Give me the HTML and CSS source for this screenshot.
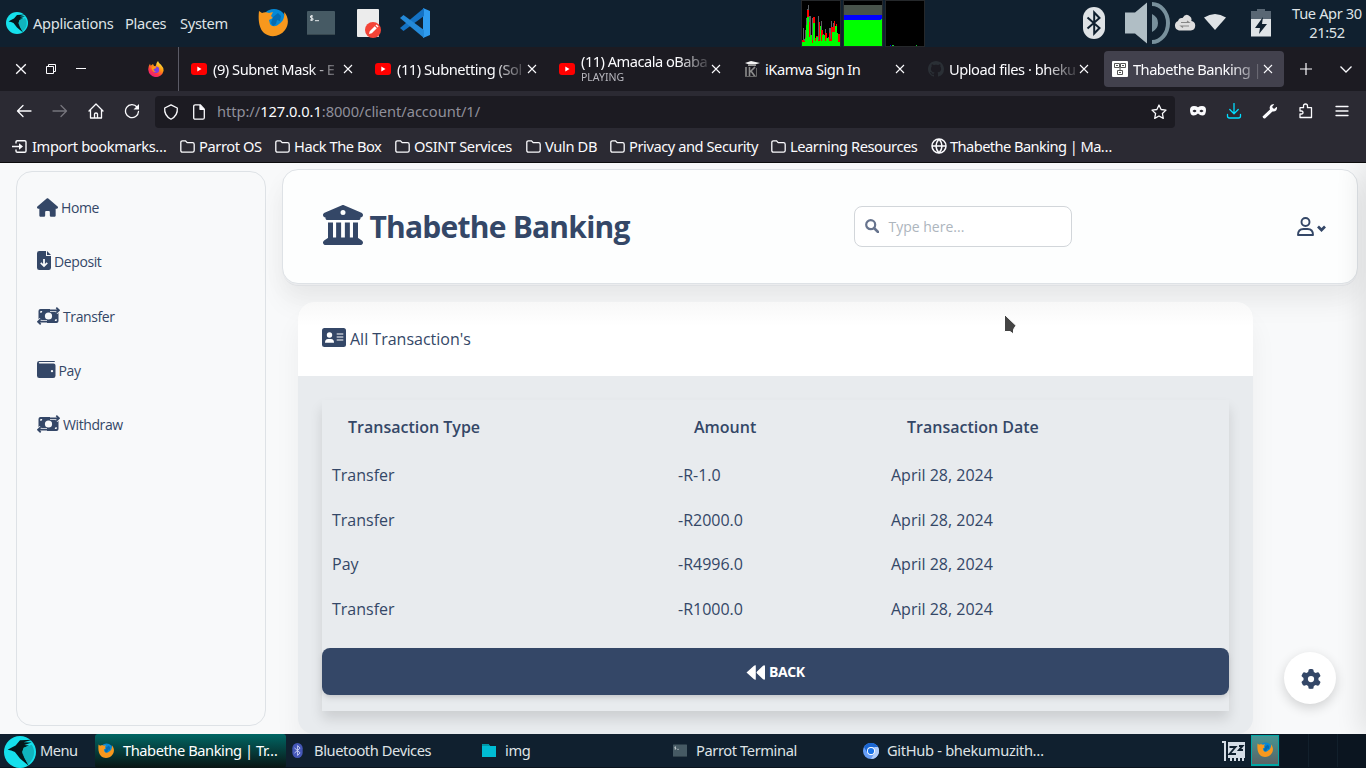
FILE: index.html
```html
<!DOCTYPE html>
<html lang="en">
<head>
<meta charset="utf-8">
<title>Thabethe Banking | Transactions</title>
<link rel="stylesheet" href="styles.css">
</head>
<body>
<svg class="defs" aria-hidden="true">
  <symbol id="parrot" viewBox="0 0 22 22"><circle cx="11" cy="11" r="11" fill="#15e0ec"/><path d="M2.500 9.500 5 8 8 6.500 11 3l8.500-.5-6 1.800 5.500.2-5 1.700 3.200.3L13.500 8l-1 3 1.500 4 3 5.500-6-5L7.500 11 5 10z" fill="#04161b"/><path d="M13.500 8 19 6c3 4 2 10-2.500 13.500L12.500 12z" fill="#0d8f99" opacity=".55"/></symbol>
  <symbol id="fox" viewBox="0 0 30 30"><circle cx="16" cy="13.500" r="12.500" fill="#0589d6"/><path d="M1 3l3 2c2-1 5-1 7 0l4-1-2 4 2 2-4 2 1 4c2 3 6 3 9 0 4-2 6-7 5-12 5 5 5 13 1 18-5 7-15 8-21 3C1 20 0 12 1 3z" fill="#f8981d"/><path d="M15 9l5-4 3 3-1 5-3-1-1 4-3 2-2-3z" fill="#046bb1"/></symbol>
  <symbol id="term" viewBox="0 0 28 24"><rect width="28" height="24" rx="1" fill="#465a64"/><path d="M0 23h28v1H0z" fill="#37474f"/><path d="M6 5H3.500v1.500L6 7.500V9H3M4.700 4v6M8 9.700h4" stroke="#e4e8ea" stroke-width="1" fill="none"/></symbol>
  <symbol id="yt" viewBox="0 0 16 12"><rect width="16" height="12" rx="3" fill="#f00"/><path d="M6.300 3.500v5l4.200-2.500z" fill="#fff"/></symbol>
  <symbol id="x" viewBox="0 0 10 10"><path d="M1 1l8 8M9 1 1 9" stroke="#fbfbfe" stroke-width="1.100" fill="none"/></symbol>
  <symbol id="folder" viewBox="0 0 15 13"><path d="M.8 2.500Q.8.800 2.500.8h3l1.700 1.900h5.300q1.700 0 1.700 1.700v6q0 1.700-1.700 1.700h-10q-1.700 0-1.700-1.700z" fill="none" stroke="#fbfbfe" stroke-width="1.300"/></symbol>
  <symbol id="bt" viewBox="0 0 22 32"><rect width="22" height="32" rx="11" fill="currentColor"/><path d="M4.500 10.500l12 10.500-5.300 5.500v-21L16.500 11l-12 10.500" fill="none" stroke="var(--rune, #10202f)" stroke-width="2"/></symbol>
  <symbol id="money" viewBox="0 0 23 18"><path d="M3.500 2h16q2 0 2 2v10q0 2-2 2h-16q-2 0-2-2V4q0-2 2-2z" fill="#344767"/><circle cx="11.500" cy="9" r="3.600" fill="#f8f9fa"/><path d="M3.300 4h2q0 2-2 2zM19.700 14h-2q0-2 2-2z" fill="#f8f9fa"/><path d="M13 3.300h9.500M19.300.7 22 3.300 19.300 5.900M10 14.700H.5M3.700 12.100 1 14.700l2.700 2.600" fill="none" stroke="#f8f9fa" stroke-width="3.200"/><path d="M13 3.300h9M19.300.7 22 3.300 19.300 5.900M10 14.700H1M3.700 12.100 1 14.700l2.700 2.600" fill="none" stroke="#344767" stroke-width="1.700"/></symbol>
</svg>

<header class="panel">
  <svg class="p-logo"><use href="#parrot"/></svg>
  <span class="p-apps">Applications</span><span class="p-places">Places</span><span class="p-system">System</span>
  <svg class="p-fox"><use href="#fox"/></svg>
  <svg class="p-term"><use href="#term"/></svg>
  <svg class="p-doc" viewBox="0 0 25 30"><rect width="22" height="28" rx="1" fill="#ececec"/><circle cx="16" cy="21" r="8" fill="#f44336"/><path d="M12 25l.7-2.800 5-5 2.100 2.100-5 5zM18.500 16.400l1-1 2.100 2.100-1 1z" fill="#fff"/></svg>
  <svg class="p-code" viewBox="0 0 30 30"><path d="M23 0l7 3v24l-7 3z" fill="#2f9cf0"/><path d="M0 20l3.500 3L24 8V0z" fill="#1472c4"/><path d="M3.500 7 0 10l24 20v-8z" fill="#2489d8"/></svg>
  <svg class="mon mon-cpu" viewBox="0 0 38 45"><rect width="38" height="45"/><path d="M1 45V27h1v11h1v-9h1V17h1V8h1V4h1v11h2v20h1V17h2v15h1v5h2v-1h1V15h1v16h2V20h1v13h2v3h1v-8h1v10h2v-2h1v-9h2v-7h1v7h1v-5h1v10h1v13z" fill="#5d6165"/><path d="M0 45v-6h2v1h2V25h1V9h2v12h1v13h2v5h1V16h2v21h1v-2h2v4h1V21h1v15h1v-7h2v8h2v-5h2v6h2v-6h1v6h1V26h3v-6h1v6h1v-3h1v18h1v-8h2v8h1v-5h1v9z" fill="#f00"/><path d="M0 45v-4h3v-4h1V24h1v-8h2v20h1v-2h2v8h1V22h2v18h1v-4h2v4h2V25h1v15h1v-6h3v6h1v-3h3v3h3V31h3v-6h2v7h1v9h2v-6h1v6h2v4z" fill="#0f0"/></svg>
  <svg class="mon" viewBox="0 0 38 45"><rect width="38" height="45"/><path d="M0 4h38v10H0z" fill="#48534b"/><path d="M0 14h38v5H0z" fill="#00f"/><path d="M0 19h37v-1h1v27H0z" fill="#0f0"/></svg>
  <svg class="mon" viewBox="0 0 38 45"><rect width="38" height="45"/><path d="M6 44h2v1H6zm24 0h1v1h-1z" fill="#1c3"/><path d="M4 44h1v1H4z" fill="#00f"/></svg>
  <svg class="p-bt"><use href="#bt"/></svg>
  <svg class="p-vol" viewBox="0 0 45 42"><path d="M0 10.500h10L22 .5v41L10 31.500H0z" fill="#b0bec5"/><path d="M27 12q6 3 6 9t-6 9zM27 0a18 21 0 0 1 0 42v-4a14 17 0 0 0 0-34z" fill="#78909c"/></svg>
  <svg class="p-cloud" viewBox="0 0 22 17"><path d="M5 16.500a5 5 0 0 1-1-9.500Q5 3.500 8.500 4 12-1.500 16 2.500q2.200 1.700 1.300 4.500a4.800 4.800 0 0 1-.5 9.500z" fill="#dedede"/><path d="M7 8.500h8l-2-1.500M15 12H7l2 1.500" fill="none" stroke="#888" stroke-width="1.100"/></svg>
  <svg class="p-wifi" viewBox="0 0 22 16"><path d="M0 3.500q11-7 22 0L11 16z" fill="#dfe3e6"/></svg>
  <svg class="p-batt" viewBox="0 0 20 28"><path d="M0 2h6V0h8v2h6v8H0z" fill="#596774"/><path d="M0 10h20v17.500H0z" fill="#dfe3e6"/><path d="M12 8 4 19h5l-1 6 8-10h-5z" fill="#10202f"/></svg>
  <div class="clock"><span>Tue Apr 30</span><span>21:52</span></div>
</header>

<div class="tabs">
  <svg class="w-x"><use href="#x"/></svg>
  <svg class="w-max" viewBox="0 0 10 10"><path d="M2.500 2.500V.5h7v7h-2M.5 2.500h7v7h-7z" fill="none" stroke="#fbfbfe"/></svg>
  <svg class="w-min" viewBox="0 0 10 10"><path d="M0 4.500h10" stroke="#fbfbfe"/></svg>
  <svg class="ffx" viewBox="0 0 16 16"><defs><linearGradient id="fg" x1=".8" y1="0" x2=".2" y2="1"><stop offset="0" stop-color="#fff44f"/><stop offset=".4" stop-color="#ff980e"/><stop offset=".7" stop-color="#ff3647"/><stop offset="1" stop-color="#e31587"/></linearGradient></defs><path d="M10 0q.5 2 3 3.700Q16 7 15.500 10A7.700 7.700 0 0 1 .3 9Q0 5.500 2 2.800l.7 2L5 3l1 2q1 .2 2-.5Q8 2 10 0z" fill="url(#fg)"/><circle cx="8" cy="8.700" r="3.200" fill="#7b3fe4"/><path d="M3.500 6.300q3-1.500 5 0-1 2-3 1.700 0 2 2.500 3-4 .8-4.500-4.700z" fill="#ff980e"/></svg>
  <div class="tablist">
    <div class="tab"><svg class="fav yt"><use href="#yt"/></svg><span class="ttl">(9) Subnet Mask - E</span><svg class="cls"><use href="#x"/></svg></div>
    <div class="tab"><svg class="fav yt"><use href="#yt"/></svg><span class="ttl">(11) Subnetting (Sol</span><svg class="cls"><use href="#x"/></svg></div>
    <div class="tab"><svg class="fav yt"><use href="#yt"/></svg><span class="ttl two">(11) Amacala oBaba<small>PLAYING</small></span><svg class="cls"><use href="#x"/></svg></div>
    <div class="tab"><svg class="fav" viewBox="0 0 16 16"><path d="M1 2l6-2 9 2-5 1.500H5z" fill="#f4f4f4"/><path d="M4 3.500h8V5H4z" fill="#999"/><path d="M2 6v9.500M5.500 6v9.500M6 11l5-5M7 10l4 5.500" stroke="#8d8d8d" stroke-width="1.600" fill="none"/><path d="M1 15.500h11.500V7" stroke="#666" fill="none"/></svg><span class="ttl plain">iKamva Sign In</span><svg class="cls"><use href="#x"/></svg></div>
    <div class="tab"><svg class="fav" viewBox="0 0 16 16"><path fill="#2a2f35" d="M8 0C3.580 0 0 3.580 0 8c0 3.540 2.290 6.530 5.470 7.590.4.070.55-.17.55-.38 0-.19-.01-.82-.01-1.490-2.010.37-2.530-.49-2.690-.94-.09-.23-.48-.94-.82-1.130-.28-.15-.68-.52-.01-.53.63-.01 1.080.58 1.230.82.72 1.210 1.870.87 2.330.66.070-.52.28-.87.51-1.070-1.780-.2-3.640-.89-3.640-3.950 0-.87.31-1.590.82-2.150-.08-.2-.36-1.020.08-2.120 0 0 .67-.21 2.200.82.64-.18 1.320-.27 2-.27s1.360.09 2 .27c1.530-1.040 2.200-.82 2.200-.82.44 1.100.16 1.920.08 2.120.51.56.82 1.270.82 2.150 0 3.070-1.870 3.750-3.650 3.950.29.25.54.73.54 1.480 0 1.070-.01 1.930-.01 2.200 0 .21.15.46.55.38A8 8 0 0 0 16 8c0-4.420-3.580-8-8-8z"/></svg><span class="ttl">Upload files · bheku</span><svg class="cls"><use href="#x"/></svg></div>
    <div class="tab on"><svg class="fav" viewBox="0 0 16 16"><rect width="16" height="16" rx="1" fill="#fff"/><path d="M2.500 2.500h5v4h-5zM8.500 2.500h5v4h-5zM5.500 9.500h5v4h-5zM8 6.500v3M4 4.500h2M10 4.500h2M7 11.500h2" fill="none" stroke="#555"/></svg><span class="ttl">Thabethe Banking |</span><svg class="cls"><use href="#x"/></svg></div>
  </div>
  <svg class="t-plus" viewBox="0 0 12 12"><path d="M6 0v12M0 6h12" stroke="#fbfbfe" stroke-width="1.200"/></svg>
  <svg class="t-chev" viewBox="0 0 12 7"><path d="M.5.500 6 6 11.500.5" fill="none" stroke="#fbfbfe" stroke-width="1.300"/></svg>
</div>

<div class="nav">
  <div class="btn"><svg viewBox="0 0 16 16"><path d="M15 8H1.800M7 2.500 1.500 8 7 13.500"/></svg></div>
  <div class="btn dim"><svg viewBox="0 0 16 16"><path d="M1 8h13.200M9 2.500 14.500 8 9 13.500"/></svg></div>
  <div class="btn"><svg viewBox="0 0 16 16"><path d="M1 8l7-7 7 7M2.500 7v8h11V7M6.500 15v-4q0-1 1.500-1t1.500 1v4"/></svg></div>
  <div class="btn"><svg viewBox="0 0 16 16"><path d="M13 4A6.500 6.500 0 1 0 14.500 8.500"/><path class="solid" d="M15 1v5.500H9.500z"/></svg></div>
  <div class="url">
    <svg class="u-shield" viewBox="0 0 16 16"><path d="M8 .8 14.300 4q.7 7.500-6.300 11.200Q1 11.500 1.700 4z"/></svg>
    <svg class="u-page" viewBox="0 0 16 16"><path d="M2.700 2.300q0-1.500 1.500-1.500h5l4.100 4.300v8.600q0 1.500-1.500 1.500H4.200q-1.500 0-1.500-1.500zM9 1v4.300h4.300"/><path d="M9 1v4.500h4.500z" class="solid"/></svg>
    <span class="addr">http://<b>127.0.0.1</b>:8000/client/account/1/</span>
    <svg class="u-star" viewBox="0 0 16 16"><path d="M8 1l2.100 4.500 4.900.6-3.600 3.400.9 4.900L8 12l-4.300 2.400.9-4.900L1 6.100l4.900-.6z"/></svg>
  </div>
  <div class="btn"><svg viewBox="0 0 16 16"><path class="solid" fill-rule="evenodd" d="M4 3q2.500 0 4 1.200Q9.500 3 12 3q4 0 4 4 0 5.500-3.700 5.500-2.300 0-4.300-2-2 2-4.300 2Q0 12.500 0 7q0-4 4-4zM2.500 8q2.300 2.600 4 0-1.700-2.300-4 0zM9.500 8q1.700 2.600 4 0-2.300-2.300-4 0z"/></svg></div>
  <div class="btn cyan"><svg viewBox="0 0 16 16"><path d="M8 .5v10M3.800 6.500 8 10.700l4.200-4.200M1.500 11.500V13q0 2 2 2h9q2 0 2-2v-1.500"/></svg></div>
  <div class="btn"><svg viewBox="0 0 16 16"><path class="solid" d="M15 4q.5 5-4.500 4.500L3 15.500q-2 .5-2.500-2L8 6.500Q6.500 2 11.500 1L12 1.500 10 4l2 2 2.500-2z"/></svg></div>
  <div class="btn"><svg viewBox="0 0 16 16"><path d="M2 8V4.700h3.500V3q0-2 2-2t2 2v1.700h4v9.800H2V11h1.500q1.500 0 1.500-1.500T3.500 8z"/></svg></div>
  <div class="btn"><svg viewBox="0 0 16 16"><path d="M2 3.500h12M2 8h12M2 12.500h12"/></svg></div>
</div>

<div class="marks">
  <div class="mark m1"><svg viewBox="0 0 15 13"><path d="M4 3.500V2Q4 .700 5.300.700h7.400q1.300 0 1.300 1.300v9q0 1.300-1.300 1.300H5.300Q4 12.300 4 11V9.500M0 6.500h9.500" fill="none" stroke="#fbfbfe" stroke-width="1.400"/><path d="M7 3.200v6.600l4-3.300z" fill="#fbfbfe"/></svg><span>Import bookmarks…</span></div>
  <div class="mark m2"><svg><use href="#folder"/></svg><span>Parrot OS</span></div>
  <div class="mark m3"><svg><use href="#folder"/></svg><span>Hack The Box</span></div>
  <div class="mark m4"><svg><use href="#folder"/></svg><span>OSINT Services</span></div>
  <div class="mark m5"><svg><use href="#folder"/></svg><span>Vuln DB</span></div>
  <div class="mark m6"><svg><use href="#folder"/></svg><span>Privacy and Security</span></div>
  <div class="mark m7"><svg><use href="#folder"/></svg><span>Learning Resources</span></div>
  <div class="mark m8"><svg class="globe" viewBox="0 0 16 16"><path d="M8 1a7 7 0 1 0 0 14A7 7 0 1 0 8 1zM8 1Q2 8 8 15 14 8 8 1M1 8h14" fill="none" stroke="#fbfbfe" stroke-width="1.500"/></svg><span>Thabethe Banking | Ma…</span></div>
</div>

<div class="page">
  <aside class="side">
    <a><svg class="i-home" viewBox="0 0 576 512"><path d="M575.800 255.500c0 18-15 32.100-32 32.100h-32l.7 160.200V472c0 22.100-17.900 40-40 40H392c-22.100 0-40-17.900-40-40v-88c0-17.700-14.300-32-32-32h-64c-17.700 0-32 14.300-32 32v88c0 22.100-17.900 40-40 40h-80c-22.100 0-40-17.900-40-40V287.600H32c-18 0-32-14-32-32.100 0-9 3-17 10-24L266.400 8c7-7 15-8 22-8s15 2 21 7l255.400 224.500c8 7 12 15 11 24z"/></svg>Home</a>
    <a><svg class="i-dep" viewBox="0 0 14 19"><path fill-rule="evenodd" d="M0 2.300Q0 0 2.300 0H9v5h5v11.700Q14 19 11.700 19H2.300Q0 19 0 16.700zM6.100 8v5L4.300 11.300 3.200 12.500 7 16.200l3.800-3.700-1.100-1.200L7.900 13V8zM10 0l4 4h-4z"/></svg>Deposit</a>
    <a><svg class="i-mon"><use href="#money"/></svg>Transfer</a>
    <a><svg class="i-pay" viewBox="0 0 18.500 17"><path fill-rule="evenodd" d="M2.300 0H17q1 0 1 1.100H2.500q-.7 0-.7.700t.7.700h14q2 0 2 2v10.200q0 2.300-2.300 2.300H2.300Q0 17 0 14.700V2.300Q0 0 2.300 0zM15 8.900a1.200 1.200 0 1 0 0 2.400 1.200 1.200 0 0 0 0-2.400z"/></svg>Pay</a>
    <a><svg class="i-mon"><use href="#money"/></svg>Withdraw</a>
  </aside>
  <main class="main">
    <div class="top">
      <svg class="bank" viewBox="0 0 512 512"><path d="M243.400 2.600l-224 96c-14 6-21.800 21-18.700 35.800S16.800 160 32 160v8c0 13.300 10.700 24 24 24h400c13.300 0 24-10.700 24-24v-8c15.200 0 28.300-10.700 31.300-25.600s-4.800-29.900-18.700-35.800l-224-96c-8-3.400-17.200-3.400-25.200 0zM128 224H64v196.300c-.6.3-1.200.7-1.800 1.100l-48 32c-11.700 7.800-17 22.400-12.900 35.900S17.900 512 32 512h448c14.100 0 26.500-9.200 30.600-22.700s-1.100-28.100-12.900-35.900l-48-32c-.6-.4-1.200-.7-1.800-1.100V224h-64v192h-40V224h-64v192h-48V224h-64v192h-40V224zM256 64a32 32 0 1 1 0 64 32 32 0 1 1 0-64z"/></svg>
      <h1>Thabethe Banking</h1>
      <div class="search"><svg viewBox="0 0 14 14"><circle cx="5.700" cy="5.700" r="4.500" fill="none" stroke="#67748e" stroke-width="2.200"/><path d="M9 9l4 4" stroke="#67748e" stroke-width="2.500" stroke-linecap="round"/></svg><span>Type here...</span></div>
      <svg class="user" viewBox="0 0 29 19"><g fill="none" stroke="#344767"><circle cx="8.500" cy="5" r="4" stroke-width="1.900"/><path d="M1 18q0-6 5.500-6h4q5.500 0 5.500 6z" stroke-width="1.900" stroke-linejoin="round"/><path d="M21 9.500l3.500 3.500L28 9.500" stroke-width="2.700"/></g></svg>
    </div>
    <section class="card">
      <div class="card-head"><svg viewBox="0 0 24 19"><rect width="24" height="19" rx="2.500" fill="#344767"/><g fill="#fff"><circle cx="7.500" cy="7" r="2.700"/><path d="M3 14.700q0-3.700 3-3.700h3q3 0 3 3.700zM14.700 5.400h6.600v1.200h-6.600zM14.700 8.400h6.600v1.200h-6.600zM14.700 11.400h6.600v1.200h-6.600z"/></g></svg>All Transaction's</div>
      <div class="card-body">
        <div class="box">
          <div class="row head"><span>Transaction Type</span><span>Amount</span><span>Transaction Date</span></div>
          <div class="row"><span>Transfer</span><span>-R-1.0</span><span>April 28, 2024</span></div>
          <div class="row"><span>Transfer</span><span>-R2000.0</span><span>April 28, 2024</span></div>
          <div class="row"><span>Pay</span><span>-R4996.0</span><span>April 28, 2024</span></div>
          <div class="row"><span>Transfer</span><span>-R1000.0</span><span>April 28, 2024</span></div>
          <div class="back"><svg viewBox="0 0 19 15"><path d="M0 7.500 7.500.7Q9.500-.5 9.500 1.500v12q0 2-2 .8zM9.500 7.500 16.500.7Q18.500-.5 18.500 1.500v12q0 2-2 .8z" fill="#fff"/><path d="M9.700 1v13" stroke="#344767" stroke-width=".7"/></svg>BACK</div>
        </div>
      </div>
    </section>
  </main>
  <div class="edge"></div>
  <div class="gear"><svg viewBox="0 0 512 512"><path d="M495.900 166.600c3.200 8.700.5 18.400-6.400 24.600l-43.300 39.400c1.100 8.300 1.700 16.800 1.700 25.400s-.6 17.100-1.700 25.400l43.300 39.400c6.900 6.200 9.600 15.900 6.400 24.600-4.400 11.900-9.700 23.300-15.800 34.300l-4.700 8.100c-6.600 11-14 21.400-22.100 31.200-5.900 7.200-15.700 9.600-24.500 6.800l-55.700-17.700c-13.400 10.300-28.200 18.900-44 25.400l-12.500 57.100c-2 9.100-9 16.300-18.200 17.800-13.800 2.300-28 3.500-42.500 3.500s-28.700-1.200-42.500-3.500c-9.200-1.500-16.200-8.700-18.200-17.800l-12.500-57.100c-15.800-6.500-30.600-15.100-44-25.400l-55.600 17.800c-8.800 2.800-18.600.3-24.500-6.800-8.100-9.800-15.500-20.200-22.100-31.200l-4.700-8.100c-6.100-11-11.400-22.400-15.800-34.300-3.200-8.700-.5-18.400 6.400-24.600l43.300-39.400C64.600 273.100 64 264.600 64 256s.6-17.100 1.700-25.400l-43.300-39.400c-6.900-6.200-9.600-15.900-6.400-24.600 4.400-11.900 9.700-23.300 15.800-34.300l4.700-8.100c6.600-11 14-21.400 22.100-31.200 5.900-7.200 15.700-9.600 24.500-6.800l55.700 17.700c13.400-10.300 28.200-18.900 44-25.400l12.500-57.100c2-9.100 9-16.300 18.200-17.800C227.300 1.200 241.500 0 256 0s28.700 1.200 42.500 3.500c9.200 1.500 16.200 8.700 18.200 17.800l12.500 57.100c15.800 6.500 30.600 15.100 44 25.400l55.700-17.700c8.800-2.800 18.600-.3 24.500 6.800 8.100 9.800 15.500 20.200 22.100 31.200l4.700 8.100c6.100 11 11.400 22.400 15.800 34.300zM256 336a80 80 0 1 0 0-160 80 80 0 1 0 0 160z"/></svg></div>
  <svg class="cursor" viewBox="0 0 14 22"><path d="M1.500 1.500v17h5.500l3.500 2.500v-4.500l2.500-4z" fill="#444" stroke="#fff" stroke-width="1"/></svg>
</div>

<footer class="task">
  <div class="menu"><svg><use href="#parrot"/></svg><span>Menu</span></div>
  <div class="win active"><svg class="t-fox"><use href="#fox"/></svg><span>Thabethe Banking | Tr…</span></div>
  <div class="win"><svg class="t-bt"><use href="#bt"/></svg><span>Bluetooth Devices</span></div>
  <div class="win"><svg class="t-fold" viewBox="0 0 14 13"><path d="M0 0h6.500l1.500 2H14v11H0z" fill="#00bcd4"/><path d="M0 0h6.500l1 2H0z" fill="#0097a7"/></svg><span>img</span></div>
  <div class="win"><svg class="t-term"><use href="#term"/></svg><span>Parrot Terminal</span></div>
  <div class="win git"><svg class="t-chr" viewBox="0 0 16 16"><circle cx="8" cy="8" r="8" fill="#669df6"/><path d="M1 4a8 8 0 0 1 14 0H8L4.500 10z" fill="#1a66d2"/><path d="M15 4a8 8 0 0 1-7 12l3.500-6V4z" fill="#aecbfa"/><circle cx="8" cy="8" r="4" fill="#fff"/><circle cx="8" cy="8" r="3.100" fill="#1a73e8"/></svg><span>GitHub - bhekumuzith…</span></div>
  <svg class="zz" viewBox="0 0 23 20"><path d="M0 0h4v20H2V2H0zM6 1h17v16h-1v3h-2v-3h-2v3h-2v-3h-2v3h-2v-3h-2v3H8v-3H6z" fill="#d5dde6"/><path d="M7.500 6h6l-6 7h6.500M17 5h3.500L17 9h4" fill="none" stroke="#10202f" stroke-width="1.900"/></svg>
  <div class="ws cur"><svg><use href="#fox"/></svg></div><div class="ws"></div><div class="ws"></div><div class="ws last"></div>
</footer>
</body>
</html>
```
FILE: styles.css
```css
* { box-sizing: border-box; }
html, body { height: 100%; }
body { margin: 0; width: 1366px; height: 768px; overflow: hidden; display: flex; flex-direction: column; font: 14.67px/20px "Noto Sans", sans-serif; color: #fbfbfe; }
svg { display: block; flex: none; }
.defs { display: none; }
span { white-space: nowrap; }

/* desktop panel */
.panel { height: 47px; flex: none; background: #10202f; display: flex; align-items: flex-start; color: #dfe3e6; }
.panel > span { margin-top: 13px; flex: none; letter-spacing: -.32px; }
.p-logo { width: 22px; height: 22px; margin: 12px 5px 0 6px; }
.p-apps { width: 92px; }
.p-places { width: 55px; }
.p-system { width: 78px; }
.p-fox { width: 30px; height: 30px; margin-top: 8px; }
.p-term { width: 28px; height: 24px; margin: 11px 0 0 19px; }
.p-doc { width: 25px; height: 30px; margin: 9px 0 0 22px; }
.p-code { width: 30px; height: 30px; margin: 8px 0 0 18px; }
.mon { width: 40px; height: 47px; margin-right: 2px; border: 1px solid #25282b; }
.mon-cpu { margin-left: 371px; }
.p-bt { width: 22px; height: 32px; margin: 7px 0 0 156px; color: #dfe3e6; }
.p-vol { width: 45px; height: 42px; margin: 2px 0 0 20px; }
.p-cloud { width: 22px; height: 17px; margin: 14px 0 0 4px; }
.p-wifi { width: 22px; height: 16px; margin: 14px 0 0 8px; }
.p-batt { width: 20px; height: 28px; margin: 9px 0 0 25px; }
.clock { width: 78px; margin: 4px 0 0 17px; display: flex; flex-direction: column; align-items: center; line-height: 19px; letter-spacing: -.38px; }

/* browser tabs */
.tabs { height: 44px; flex: none; background: #1c1b22; display: flex; align-items: center; }
.w-x { width: 12px; height: 12px; margin-left: 15px; }
.w-max { width: 10px; height: 10px; margin-left: 19px; }
.w-min { width: 10px; height: 10px; margin-left: 20px; }
.ffx { width: 16px; height: 16px; margin-left: 62px; }
.tablist { display: flex; height: 44px; margin-left: 14px; border-left: 1px solid #5b5b66; padding-left: 3px; }
.tab { width: 180px; height: 36px; margin: 4px 2px; padding-left: 8px; border-radius: 4px; display: flex; align-items: center; letter-spacing: -.47px; }
.tab.on { background: #42414d; letter-spacing: -.53px; }
.fav { width: 16px; height: 16px; }
.yt { height: 12px; margin: 0 1px 0 -1px; }
.ttl { width: 127px; margin: 0 1px 0 5px; overflow: hidden; -webkit-mask-image: linear-gradient(90deg, #000 76%, transparent 104%); mask-image: linear-gradient(90deg, #000 76%, transparent 104%); }
.ttl.plain { -webkit-mask-image: none; mask-image: none; }
.two { line-height: 17px; margin-top: 1px; letter-spacing: -.52px; }
.two small { display: block; font-size: 10.500px; line-height: 14px; color: #b8b8bf; margin-bottom: 2px; letter-spacing: 0; }
.cls { width: 10px; height: 10px; margin-left: 2px; }
.t-plus { width: 12px; height: 12px; margin-left: 14px; }
.t-chev { width: 12px; height: 7px; margin-left: 28px; }

/* toolbar */
.nav { height: 40px; flex: none; background: #2b2a33; display: flex; align-items: center; padding-left: 6px; }
.btn { width: 36px; display: flex; justify-content: center; }
.nav svg { width: 16px; height: 16px; fill: none; stroke: #fbfbfe; stroke-width: 1.300; stroke-linejoin: round; stroke-linecap: round; }
.nav .dim svg { stroke: #76757d; }
.nav .cyan svg { stroke: #00ddff; }
.nav .solid { fill: #fbfbfe; stroke: none; }
.url { width: 1020px; height: 32px; margin: 1px 5px 0; background: #1c1b22; border-radius: 4px; display: flex; align-items: center; padding-left: 8px; }
.u-page { margin: 0 10px 0 12px; }
.addr { width: 934px; margin-top: -2px; color: #8f8f9a; letter-spacing: -.05px; }
.addr b { font-weight: 400; color: #fbfbfe; }

/* bookmarks */
.marks { height: 32px; flex: none; background: #2b2a33; border-bottom: 1px solid #0c0c0d; display: flex; align-items: center; padding: 0 0 1px 12px; letter-spacing: -.4px; }
.mark { display: flex; align-items: center; gap: 4px; flex: none; }
.mark span { margin-top: -1px; }
.mark svg { width: 15px; height: 13px; }
.mark .globe { width: 16px; height: 16px; margin-right: -1px; }
.m1 { width: 168px; gap: 5px; letter-spacing: -.36px; } .m2 { width: 95px; } .m3 { width: 120px; letter-spacing: -.46px; } .m4 { width: 131px; }
.m5 { width: 84px; letter-spacing: -.35px; } .m6 { width: 161px; letter-spacing: -.44px; } .m7 { width: 160px; letter-spacing: -.44px; } .m8 { letter-spacing: -.57px; }

/* web page */
.page { position: relative; height: 571px; flex: none; overflow: hidden; background: #f8f9fa; color: #344767; font-family: "Open Sans", sans-serif; display: flex; align-items: flex-start; }
.page svg { fill: #344767; }
.side { width: 250px; height: 555px; margin: 8px 16px 0 16px; border: 1px solid #dee2e6; border-radius: 16px; padding: 9px 20px; flex: none; }
.side a { height: 54.250px; display: flex; align-items: center; gap: 3px; font-size: 14px; letter-spacing: -.4px; }
.side svg { margin-top: -2px; }
.side .i-dep { margin-top: -3px; }
.i-home { width: 21px; height: 19px; } .i-dep { width: 14px; height: 19px; } .i-mon { width: 23px; height: 18px; } .i-pay { width: 18.500px; height: 17px; }
.main { width: 1076px; margin-top: 6px; flex: none; }
.top { height: 115px; border: 1px solid #dee2e6; border-radius: 16px; background: #fdfefe; box-shadow: 0 1px 0 #ebecee, 0 3px 0 -1px #dfe1e4, 0 20px 27px 0 rgba(0,0,0,.05), 0 8px 27px rgba(0,0,0,.03); display: flex; align-items: center; padding-left: 39px; }
.bank { width: 42px; height: 40px; margin-top: -3px; }
h1 { width: 491px; margin: 0 0 0 5.500px; font-size: 30px; line-height: 40px; letter-spacing: -.78px; white-space: nowrap; }
.search { width: 218px; height: 41px; margin-left: -6.500px; border: 1px solid #d2d6da; border-radius: 8px; background: #fff; display: flex; align-items: center; padding-left: 10px; color: #adb5bd; font-size: 14px; }
.search svg { width: 14px; height: 14px; margin: 0 9.500px 2px 0; }
.user { width: 29px; height: 19px; margin-left: 225px; margin-top: -1px; }
.card { width: 955px; height: 432px; margin: 18px 0 0 16px; border-radius: 16px; overflow: hidden; box-shadow: 0 20px 27px 0 rgba(0,0,0,.05); background: #e8ebee; }
.card-head { height: 74px; background: linear-gradient(#f8f8f8, #fff 24px); display: flex; align-items: center; gap: 4px; padding-left: 24px; font-size: 16px; }
.card-head svg { width: 24px; height: 19px; margin-top: -3px; }
.card-body { padding: 24px; }
.box { height: 311px; background: #e8ebee; box-shadow: 0 8px 12px rgba(0,0,0,.12); font-size: 16px; }
.row { display: grid; grid-template-columns: 346px 213px 1fr; height: 44.600px; align-items: center; padding-left: 10px; }
.row.head { height: 53px; padding-left: 26px; font-weight: 600; }
.back { height: 47px; margin-top: 16.600px; padding-top: 2px; border-radius: 8px; background: #344767; color: #fff; font-size: 14px; font-weight: 700; letter-spacing: -.4px; display: flex; align-items: center; justify-content: center; gap: 2.500px; box-shadow: 0 4px 7px -1px rgba(0,0,0,.11), 0 2px 4px -1px rgba(0,0,0,.07); }
.back svg { width: 20px; height: 15px; }
.edge { position: absolute; right: -20px; top: 0; width: 20px; height: 571px; box-shadow: 0 0 30px rgba(0,0,0,.16); }
.gear { position: absolute; left: 1284px; top: 489px; width: 52px; height: 52px; border-radius: 50%; background: #fff; box-shadow: 0 4px 12px rgba(0,0,0,.16); display: flex; align-items: center; justify-content: center; }
.gear svg { width: 20px; height: 20px; margin: 1px 0 0 1px; }
.cursor { position: absolute; z-index: 2; left: 1003px; top: 150px; width: 14px; height: 22px; }

/* taskbar */
.task { height: 34px; flex: none; background: #10202f; color: #dfe3e6; display: flex; align-items: center; border-bottom: 1px solid #0a141e; letter-spacing: -.4px; }
.task > * { flex: none; }
.task span { margin-top: -1px; }
.menu { width: 95px; display: flex; align-items: center; gap: 4px; padding-left: 4px; height: 34px; overflow: hidden; letter-spacing: -.55px; }
.menu svg { width: 32px; height: 32px; margin-top: 2px; }
.win { width: 191px; height: 34px; display: flex; align-items: center; padding-left: 3px; }
.win svg { width: 16px; height: 16px; }
.win span { margin-left: 9px; }
.active { background: linear-gradient(#006664, #0a1413); border-radius: 3px; color: #fff; letter-spacing: -.44px; }
.win .t-bt { width: 11px; height: 15px; margin: 0 2px 0 3px; color: #4557b8; --rune: #c9d0f5; }
.win .t-fold, .win .t-term { width: 14px; height: 13px; margin: 0 0 0 2px; }
.git { width: 363px; padding-left: 4px; letter-spacing: -.32px; }
.win.git span { margin-left: 8px; }
.zz { width: 23px; height: 20px; margin-right: 6px; }
.ws { width: 29px; height: 33px; background: #0b1520; border-right: 1px solid #12202c; }
.cur { width: 28px; height: 31px; margin-right: 1px; border: 1px solid #00a7a5; border-bottom-width: 2px; background: linear-gradient(#459594, #5b6364); display: flex; align-items: center; justify-content: center; }
.cur svg { width: 16px; height: 16px; }
.last { width: 28px; border-right: 0; }
```
